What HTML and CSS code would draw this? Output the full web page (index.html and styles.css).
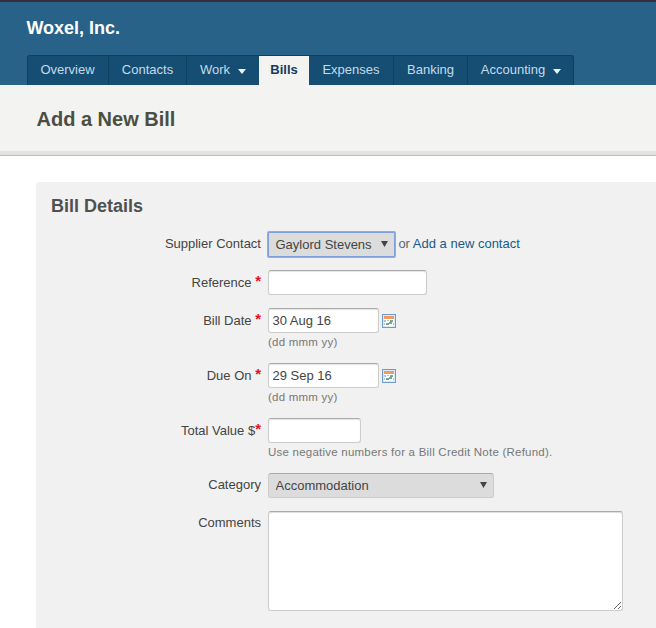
FILE: index.html
```html
<!DOCTYPE html>
<html lang="en">
<head>
<meta charset="utf-8">
<title>Add a New Bill</title>
<link rel="stylesheet" href="styles.css">
</head>
<body>
<svg class="defs" width="0" height="0">
  <symbol id="calendar" viewBox="0 0 14 14">
    <rect x=".5" y=".5" width="13" height="13" fill="#dce9f8" stroke="#6f9bcc"/>
    <path fill="#f09a63" d="M2 2h10v3H2z"/>
    <path fill="#fff" d="M2 5h10v7H2z"/>
    <path fill="#a9c4de" d="M2 6h2v2H2zM2 9h1v2H2zM11 9h1v2h-1zM5 6h2v1H5z"/>
    <path fill="#79ad82" d="M8 6h3v2H8zM4 9h3v2H4zM7 8h3v2H7z"/>
    <path fill="#5688aa" d="M5 10h1v1H5zM8 7h1v1H8z"/>
  </symbol>
</svg>
<header class="header">
  <div class="company">Woxel, Inc.</div>
  <nav class="tabs">
    <a class="tab tab-overview">Overview</a>
    <a class="tab tab-contacts">Contacts</a>
    <a class="tab tab-work">Work<i class="caret"></i></a>
    <a class="tab tab-bills active">Bills</a>
    <a class="tab tab-expenses">Expenses</a>
    <a class="tab tab-banking">Banking</a>
    <a class="tab tab-accounting">Accounting<i class="caret"></i></a>
  </nav>
</header>
<div class="title-bar"><h1>Add a New Bill</h1></div>
<form class="panel">
  <h2>Bill Details</h2>
  <div class="row">
    <label>Supplier Contact</label>
    <div class="control"><span class="select supplier"><select><option>Gaylord Stevens</option></select><i class="arrow"></i></span><span class="or">or <a>Add a new contact</a></span></div>
  </div>
  <div class="row">
    <label>Reference <b>*</b></label>
    <div class="control"><input class="reference" type="text"></div>
  </div>
  <div class="row hinted">
    <label>Bill Date <b>*</b></label>
    <div class="control"><input class="date" type="text" value="30 Aug 16"><svg class="calendar" viewBox="0 0 14 14"><use href="#calendar" width="14" height="14"/></svg></div>
    <div class="hint">(dd mmm yy)</div>
  </div>
  <div class="row hinted">
    <label>Due On <b>*</b></label>
    <div class="control"><input class="date" type="text" value="29 Sep 16"><svg class="calendar" viewBox="0 0 14 14"><use href="#calendar" width="14" height="14"/></svg></div>
    <div class="hint">(dd mmm yy)</div>
  </div>
  <div class="row hinted">
    <label>Total Value $<b>*</b></label>
    <div class="control"><input class="total" type="text"></div>
    <div class="hint">Use negative numbers for a Bill Credit Note (Refund).</div>
  </div>
  <div class="row">
    <label>Category</label>
    <div class="control"><span class="select category"><select><option>Accommodation</option></select><i class="arrow"></i></span></div>
  </div>
  <div class="row">
    <label>Comments</label>
    <textarea></textarea>
  </div>
</form>
</body>
</html>
```

FILE: styles.css
```css
* { box-sizing: border-box; }
body {
  margin: 0;
  height: 628px;
  overflow: hidden;
  background: #fff;
  color: #444;
  font: 13px/16px "Liberation Sans", Arial, sans-serif;
}
.defs { display: block; height: 0; }
.header {
  height: 85px;
  padding-left: 27px;
  border-top: 2px solid #352f3b;
  background: #286289;
}
.company {
  height: 53px;
  margin-left: -.6px;
  padding-top: 15px;
  color: #fff;
  font-size: 18px;
  font-weight: bold;
  line-height: 22px;
}
.tabs {
  display: flex;
  width: 547px;
  height: 30px;
  border: 1px solid #0e3f60;
  border-bottom: 0;
  border-radius: 3px 3px 0 0;
  background: #154d73;
}
.tab {
  display: flex;
  justify-content: center;
  border-right: 1px solid #0e3f60;
  color: #c3dcea;
  line-height: 28px;
}
.tab-overview { width: 81px; padding-right: 1px; }
.tab-contacts { width: 78px; }
.tab-work { width: 72px; border-right: 0; }
.tab-bills { width: 50px; }
.tab-expenses { width: 85px; }
.tab-banking { width: 74px; }
.tab-accounting { width: 105px; padding-left: 1px; border-right: 0; }
.tab.active { border: 0; background: #f3f3f1; color: #123c59; font-weight: bold; }
.caret {
  margin: 13px 0 0 8px;
  width: 8px;
  height: 5px;
  border: solid transparent;
  border-width: 5px 4px 0;
  border-top-color: #eaf6fc;
}
.title-bar {
  height: 71px;
  padding: 22px 0 0 36.5px;
  border-bottom: 1px solid #bfbfbc;
  background: linear-gradient(#f3f3f1 66px, #e2e2e0 66px);
}
h1 { margin: 0; color: #4b4f42; font-size: 20px; line-height: 24px; }
.panel {
  height: 460px;
  margin: 26px 0 0 36px;
  padding-top: 13px;
  border-radius: 3px 0 0;
  background: #f1f1f1;
}
h2 { height: 37px; margin: 0 0 0 15px; color: #505050; font-size: 18px; line-height: 22px; }
.row {
  display: grid;
  grid-template-columns: 225px 1fr;
  column-gap: 7px;
  height: 38px;
  align-content: start;
}
.hinted { height: 55px; }
label { padding-top: 4px; text-align: right; }
label b { color: #e3101c; font-size: 15px; line-height: 14px; vertical-align: 1px; }
.control { display: flex; height: 25px; align-items: center; }
input, select, textarea {
  border: 1px solid #ccc;
  border-top-color: #aaa;
  border-radius: 3px;
  outline: 0;
  background: #fff;
  color: #444;
  font: inherit;
}
input { height: 25px; padding: 1px 4px 1px 3.5px; box-shadow: inset 0 1px 1px #e5e5e5; }
.reference { width: 159px; }
.date { width: 111px; }
.total { width: 93px; }
.calendar { width: 14px; height: 14px; margin: 1px 0 0 3px; }
.select { display: grid; height: 25px; align-items: center; }
.select > * { grid-area: 1 / 1; }
select {
  appearance: none;
  width: 100%;
  height: 25px;
  padding: 1px 6.5px 0;
  border-color: #ccc;
  border-top-color: #aaa;
  background: #dcdcdc;
}
.arrow {
  justify-self: end;
  width: 7px;
  height: 6px;
  margin: 0 7px 1px 0;
  background: #444;
  clip-path: polygon(0 0, 100% 0, 50% 100%);
  pointer-events: none;
}
.supplier { width: 127px; }
.supplier select { border-color: #7f9fde; border-radius: 1px; box-shadow: 0 0 0 1px #8facea; }
.category { width: 226px; }
.or { margin: -2px 0 0 3.4px; color: #666; }
.or a { color: #175b86; }
.hint { grid-column: 2; padding-top: 1px; color: #777; font-size: 11.5px; letter-spacing: .23px; }
textarea { width: 355px; height: 100px; resize: both; box-shadow: inset 0 1px 1px #ddd; }
```
